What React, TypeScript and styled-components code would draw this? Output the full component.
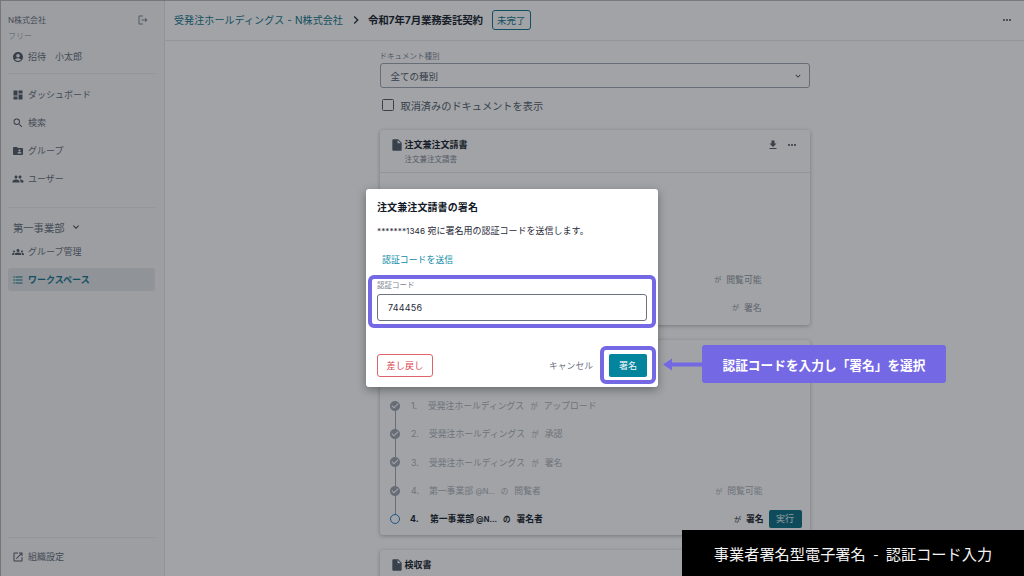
import React from "react";
import styled, { createGlobalStyle } from "styled-components";
import {
  MdAccountCircle, MdDashboard, MdSearch, MdFolderShared, MdPeople, MdExpandMore, MdGroups,
  MdFormatListBulleted, MdOutlineOpenInNew, MdOutlineLogout, MdInsertDriveFile, MdFileDownload,
  MdMoreHoriz, MdCheckCircle, MdChevronRight,
} from "react-icons/md";

const Global = createGlobalStyle`
  html, body { margin: 0; padding: 0; width: 1024px; height: 576px; overflow: hidden; background: #fff; }
  * { box-sizing: border-box; }
  body { font-family: Inter, "Noto Sans CJK JP", "Noto Sans", sans-serif; color: #1f2937; }
`;

const Page = styled.div`
  position: relative; width: 1024px; height: 576px; display: flex; overflow: hidden;
`;
const Sidebar = styled.aside`
  width: 165px; height: 576px; flex: none; background: #f6f7f8; border-right: 1px solid #e2e5e9;
  padding: 13px 9px 0 8px; display: flex; flex-direction: column;
`;
const OrgRow = styled.div`
  display: flex; justify-content: space-between; align-items: center; height: 13px;
  font-size: 8px; color: #5f6875; padding-right: 6px;
  svg { font-size: 12px; color: #7b8390; }
`;
const Plan = styled.div`
  font-size: 8px; color: #a8aeb6; margin-top: 4px; height: 12px; line-height: 12px;
`;
const Divider = styled.hr<{ $top: number; $bottom: number }>`
  border: 0; border-top: 1px solid #e5e7eb; width: 100%; flex: none;
  margin: ${(p) => p.$top}px 0 ${(p) => p.$bottom}px;
`;
const NavItem = styled.div<{ $active?: boolean; $before?: number; $after?: number }>`
  display: flex; align-items: center; gap: 4px; height: 23px; padding-left: 4px; border-radius: 3px; flex: none;
  font-size: 9px;
  margin: ${(p) => p.$before ?? 0}px 0 ${(p) => p.$after ?? 0}px;
  color: ${(p) => (p.$active ? "#0a7089" : "#5f6875")};
  font-weight: ${(p) => (p.$active ? 700 : 400)};
  background: ${(p) => (p.$active ? "#e2e3e5" : "transparent")};
  svg { font-size: 12px; flex: none; width: 12px; color: ${(p) => (p.$active ? "#0a7089" : "#4b5563")}; }
`;
const NavStack = styled.nav<{ $gap: number }>`
  display: flex; flex-direction: column; gap: ${(p) => p.$gap}px;
`;
const Section = styled.div`
  display: flex; align-items: center; gap: 6px; height: 20px; padding-left: 5px;
  font-size: 10.3px; color: #5f6875; margin-bottom: 3px;
  svg { font-size: 12px; color: #374151; }
`;
const Spacer = styled.div`
  flex: 1;
`;

const Main = styled.main`
  flex: 1; display: flex; flex-direction: column; min-width: 0; background: #fff;
`;
const Header = styled.header`
  height: 41px; flex: none; border-bottom: 1px solid #e5e7eb; display: flex; align-items: center;
  padding: 0 11px 1px 9px; font-size: 10px;
`;
const Crumb = styled.span`
  color: #0a7089; letter-spacing: 0.1px;
`;
const Chevron = styled(MdChevronRight)`
  font-size: 16px; color: #1f2937; margin: 0 4px 0 5px;
`;
const DocTitle = styled.span`
  font-weight: 700; color: #111827; font-size: 10.5px; letter-spacing: -0.2px;
`;
const Tag = styled.span`
  margin-left: 9px; height: 20px; width: 39px; border: 1px solid #0a7089; border-radius: 3px;
  color: #0a7089; font-size: 9.5px; display: flex; align-items: center; justify-content: center;
`;
const HeaderMore = styled(MdMoreHoriz)`
  margin-left: auto; font-size: 12px; color: #4b5563;
`;
const Content = styled.div`
  width: 430px; margin: 0 auto; padding-top: 10px; display: flex; flex-direction: column;
`;
const FieldLabel = styled.div`
  font-size: 7.5px; color: #7b8390; height: 12px; line-height: 11px;
`;
const Select = styled.div`
  height: 25px; border: 1px solid #9ca3af; border-radius: 3px; display: flex; align-items: center;
  justify-content: space-between; padding: 0 6px 0 10px; font-size: 9.5px; color: #4b5563;
  svg { font-size: 10px; }
`;
const CheckRow = styled.label`
  display: flex; align-items: center; gap: 7px; height: 34px; padding: 0 2px; font-size: 10.2px; color: #4b5563;
  margin-bottom: 8px;
`;
const CheckBox = styled.span`
  width: 12px; height: 12px; border: 1.5px solid #4b5563; border-radius: 1.5px;
`;
const Card = styled.section<{ $height: number }>`
  height: ${(p) => p.$height}px; flex: none; border-radius: 3px; background: #fff; margin-bottom: 15px;
  box-shadow: 0 1px 4px rgba(0,0,0,.3); display: flex; flex-direction: column;
`;
const CardHead = styled.div`
  padding: 8px 11px 0 10px; height: 43px; border-bottom: 1px solid #e5e7eb;
  display: flex; gap: 1px; flex: none;
`;
const DocIcon = styled(MdInsertDriveFile)`
  font-size: 14px; color: #4b5563; flex: none;
`;
const CardTitles = styled.div`
  flex: 1;
`;
const CardTitle = styled.div`
  font-size: 9px; font-weight: 700; color: #111827; line-height: 13px;
`;
const CardSub = styled.div`
  font-size: 7.5px; color: #7b8390; margin-top: 4px; line-height: 10px;
`;
const CardTools = styled.div`
  display: flex; gap: 7px; height: 13px; align-items: center; padding-right: 1px;
  svg { font-size: 12px; color: #4b5563; }
`;
const CardRows = styled.div`
  flex: 1; padding: 102px 48px 0 0; display: flex; flex-direction: column; gap: 18px; align-items: flex-end;
`;
const Verb = styled.div`
  font-size: 8.8px; color: #8b929c; line-height: 10px; display: flex; gap: 5px;
  small { font-size: 7px; }
`;
const Steps = styled.ol`
  list-style: none; margin: 0; padding: 51.5px 8px 0 10.5px; display: flex; flex-direction: column; flex: 1;
`;
const Step = styled.li<{ $current?: boolean; $last?: boolean }>`
  position: relative; height: 28.3px; display: flex; align-items: center; gap: 6px;
  font-size: 8.8px; color: ${(p) => (p.$current ? "#111827" : "#a8aeb6")};
  font-weight: ${(p) => (p.$current ? 700 : 400)};
  ${(p) => !p.$last && `&::before { content: ""; position: absolute; left: 4.5px; top: 18px; height: 20px; width: 1px; background: #9ca3af; }`}
`;
const StepDone = styled(MdCheckCircle)`
  font-size: 12px; color: #9ca3af; flex: none; margin-left: -1px; width: 12px;
`;
const StepOpen = styled.span`
  width: 10px; height: 10px; border: 1px solid #1f77c9; border-radius: 50%; flex: none;
`;
const StepNum = styled.span<{ $w: number }>`
  width: ${(p) => p.$w}px; margin-left: 4px; flex: none;
`;
const Who = styled.span`
  small { font-size: 7.5px; }
`;
const Tail = styled.span<{ $end?: number }>`
  margin-left: auto; margin-right: ${(p) => p.$end ?? 0}px; display: flex; align-items: center; gap: 5px;
  small { font-size: 7px; font-weight: 400; }
`;
const RunButton = styled.span`
  width: 33px; height: 18px; background: #036a80; color: #e8eef0; border-radius: 2px; font-size: 9px; font-weight: 400;
  display: flex; align-items: center; justify-content: center;
`;

const Dim = styled.div`
  position: absolute; inset: 0; background: rgba(30, 35, 42, 0.42);
  box-shadow: inset 1px 1px 0 rgba(0,0,0,.25);
`;
const Modal = styled.div`
  position: absolute; left: 366px; top: 189px; width: 292px; height: 198px; background: #fff; border-radius: 3px;
  box-shadow: 0 3px 10px rgba(0,0,0,.35); padding: 10px 11px 10px; display: flex; flex-direction: column;
`;
const ModalTitle = styled.h2`
  margin: 0; font-size: 10px; font-weight: 700; color: #111827; line-height: 16px; letter-spacing: 0.1px;
`;
const ModalText = styled.p`
  margin: 8px 0 0; font-size: 9px; line-height: 16px; color: #1f2937;
`;
const MaskedNumber = styled.span`
  font-size: 8.2px; letter-spacing: 0.05px;
`;
const SendLink = styled.div`
  margin: 13px 0 0 5px; font-size: 8.8px; line-height: 16px; color: #0b8aa6; letter-spacing: 0.1px;
`;
const Marked = styled.div<{ $x: number; $top: number; $bottom: number }>`
  position: relative;
  &::after {
    content: ""; position: absolute; pointer-events: none;
    inset: ${(p) => -p.$top}px ${(p) => -p.$x}px ${(p) => -p.$bottom}px; border: 4px solid #7468e4; border-radius: 6px;
  }
`;
const Field = styled(Marked)`
  margin-top: 13px; display: flex; flex-direction: column;
`;
const CodeLabel = styled.div`
  font-size: 7.5px; line-height: 10px; color: #7b8390; height: 13px;
`;
const CodeInput = styled.div`
  height: 27px; border: 1px solid #6b7280; border-radius: 3px; display: flex; align-items: center;
  padding-left: 10px; font-size: 9px; color: #1f2937; letter-spacing: 0.2px;
`;
const Footer = styled.div`
  margin-top: auto; display: flex; align-items: center; height: 23px;
`;
const ReturnButton = styled.button`
  width: 56px; height: 23px; padding: 0; background: #fff; border: 1px solid #e0636b; border-radius: 3px; color: #d9434e;
  font: inherit; font-size: 9px; letter-spacing: 0.2px;
`;
const Cancel = styled.span`
  margin-left: auto; margin-right: 16px; font-size: 8.8px; color: #6b7280;
`;
const SignButton = styled(Marked)`
  width: 38px; height: 23px; background: #03859e; color: #f3f6f7; border-radius: 2px; font-size: 9px;
  display: flex; align-items: center; justify-content: center;
`;
const Arrow = styled.svg`
  position: absolute; left: 663px; top: 358px;
`;
const Callout = styled.div`
  position: absolute; left: 702px; top: 345px; width: 244px; height: 38px; background: #7468e4; border-radius: 3px;
  color: #fff; font-size: 12.7px; font-weight: 700; display: flex; align-items: center; justify-content: center;
`;
const Caption = styled.div`
  position: absolute; right: 0; bottom: 0; width: 342px; height: 46px; background: #000; color: #f4f4f4;
  font-size: 15.2px; display: flex; align-items: center; justify-content: center; word-spacing: 4px;
  font-family: "Noto Sans CJK JP", sans-serif;
`;

export default function App() {
  return (
    <>
      <Global />
      <Page>
        <Sidebar>
          <OrgRow>
            <span>N株式会社</span>
            <MdOutlineLogout />
          </OrgRow>
          <Plan>フリー</Plan>
          <NavItem $before={3}><MdAccountCircle />招待　小太郎</NavItem>
          <Divider $top={5} $bottom={9} />
          <NavStack $gap={5}>
            <NavItem><MdDashboard />ダッシュボード</NavItem>
            <NavItem><MdSearch />検索</NavItem>
            <NavItem><MdFolderShared />グループ</NavItem>
            <NavItem><MdPeople />ユーザー</NavItem>
          </NavStack>
          <Divider $top={17} $bottom={9} />
          <Section>第一事業部<MdExpandMore /></Section>
          <NavStack $gap={5}>
            <NavItem><MdGroups />グループ管理</NavItem>
            <NavItem $active><MdFormatListBulleted />ワークスペース</NavItem>
          </NavStack>
          <Spacer />
          <Divider $top={0} $bottom={7} />
          <NavItem $after={8}><MdOutlineOpenInNew />組織設定</NavItem>
        </Sidebar>
        <Main>
          <Header>
            <Crumb>受発注ホールディングス - N株式会社</Crumb>
            <Chevron />
            <DocTitle>令和7年7月業務委託契約</DocTitle>
            <Tag>未完了</Tag>
            <HeaderMore />
          </Header>
          <Content>
            <FieldLabel>ドキュメント種別</FieldLabel>
            <Select>全ての種別<MdExpandMore /></Select>
            <CheckRow><CheckBox />取消済みのドキュメントを表示</CheckRow>
            <Card $height={195}>
              <CardHead>
                <DocIcon />
                <CardTitles>
                  <CardTitle>注文兼注文請書</CardTitle>
                  <CardSub>注文兼注文請書</CardSub>
                </CardTitles>
                <CardTools><MdFileDownload /><MdMoreHoriz /></CardTools>
              </CardHead>
              <CardRows>
                <Verb><small>が</small>閲覧可能</Verb>
                <Verb><small>が</small>署名</Verb>
              </CardRows>
            </Card>
            <Card $height={195}>
              <Steps>
                <Step><StepDone /><StepNum $w={11}>1.</StepNum><Who>受発注ホールディングス</Who><Who><small>が</small></Who>アップロード</Step>
                <Step><StepDone /><StepNum $w={12}>2.</StepNum><Who>受発注ホールディングス</Who><Who><small>が</small></Who>承認</Step>
                <Step><StepDone /><StepNum $w={12}>3.</StepNum><Who>受発注ホールディングス</Who><Who><small>が</small></Who>署名</Step>
                <Step><StepDone /><StepNum $w={12}>4.</StepNum><Who>第一事業部 <small>@N...</small></Who><Who><small>の</small></Who>閲覧者<Tail $end={39}><small>が</small>閲覧可能</Tail></Step>
                <Step $current $last><StepOpen /><StepNum $w={14}>4.</StepNum><Who>第一事業部 <small>@N...</small></Who><Who><small>の</small></Who>署名者<Tail><small>が</small>署名<RunButton>実行</RunButton></Tail></Step>
              </Steps>
            </Card>
            <Card $height={60}>
              <CardHead>
                <DocIcon />
                <CardTitles><CardTitle>検収書</CardTitle></CardTitles>
              </CardHead>
            </Card>
          </Content>
        </Main>
        <Dim />
        <Modal>
          <ModalTitle>注文兼注文請書の署名</ModalTitle>
          <ModalText><MaskedNumber>*******1346</MaskedNumber> 宛に署名用の認証コードを送信します。</ModalText>
          <SendLink>認証コードを送信</SendLink>
          <Field $x={9} $top={6} $bottom={7}>
            <CodeLabel>認証コード</CodeLabel>
            <CodeInput>744456</CodeInput>
          </Field>
          <Footer>
            <ReturnButton>差し戻し</ReturnButton>
            <Cancel>キャンセル</Cancel>
            <SignButton $x={9} $top={8} $bottom={7}>署名</SignButton>
          </Footer>
        </Modal>
        <Arrow width="40" height="13" viewBox="0 0 40 13">
          <path d="M0 6.5 L9 .5 V4.5 H40 V8.5 H9 V12.5 Z" fill="#7468e4" />
        </Arrow>
        <Callout>認証コードを入力し「署名」を選択</Callout>
        <Caption>事業者署名型電子署名 - 認証コード入力</Caption>
      </Page>
    </>
  );
}
